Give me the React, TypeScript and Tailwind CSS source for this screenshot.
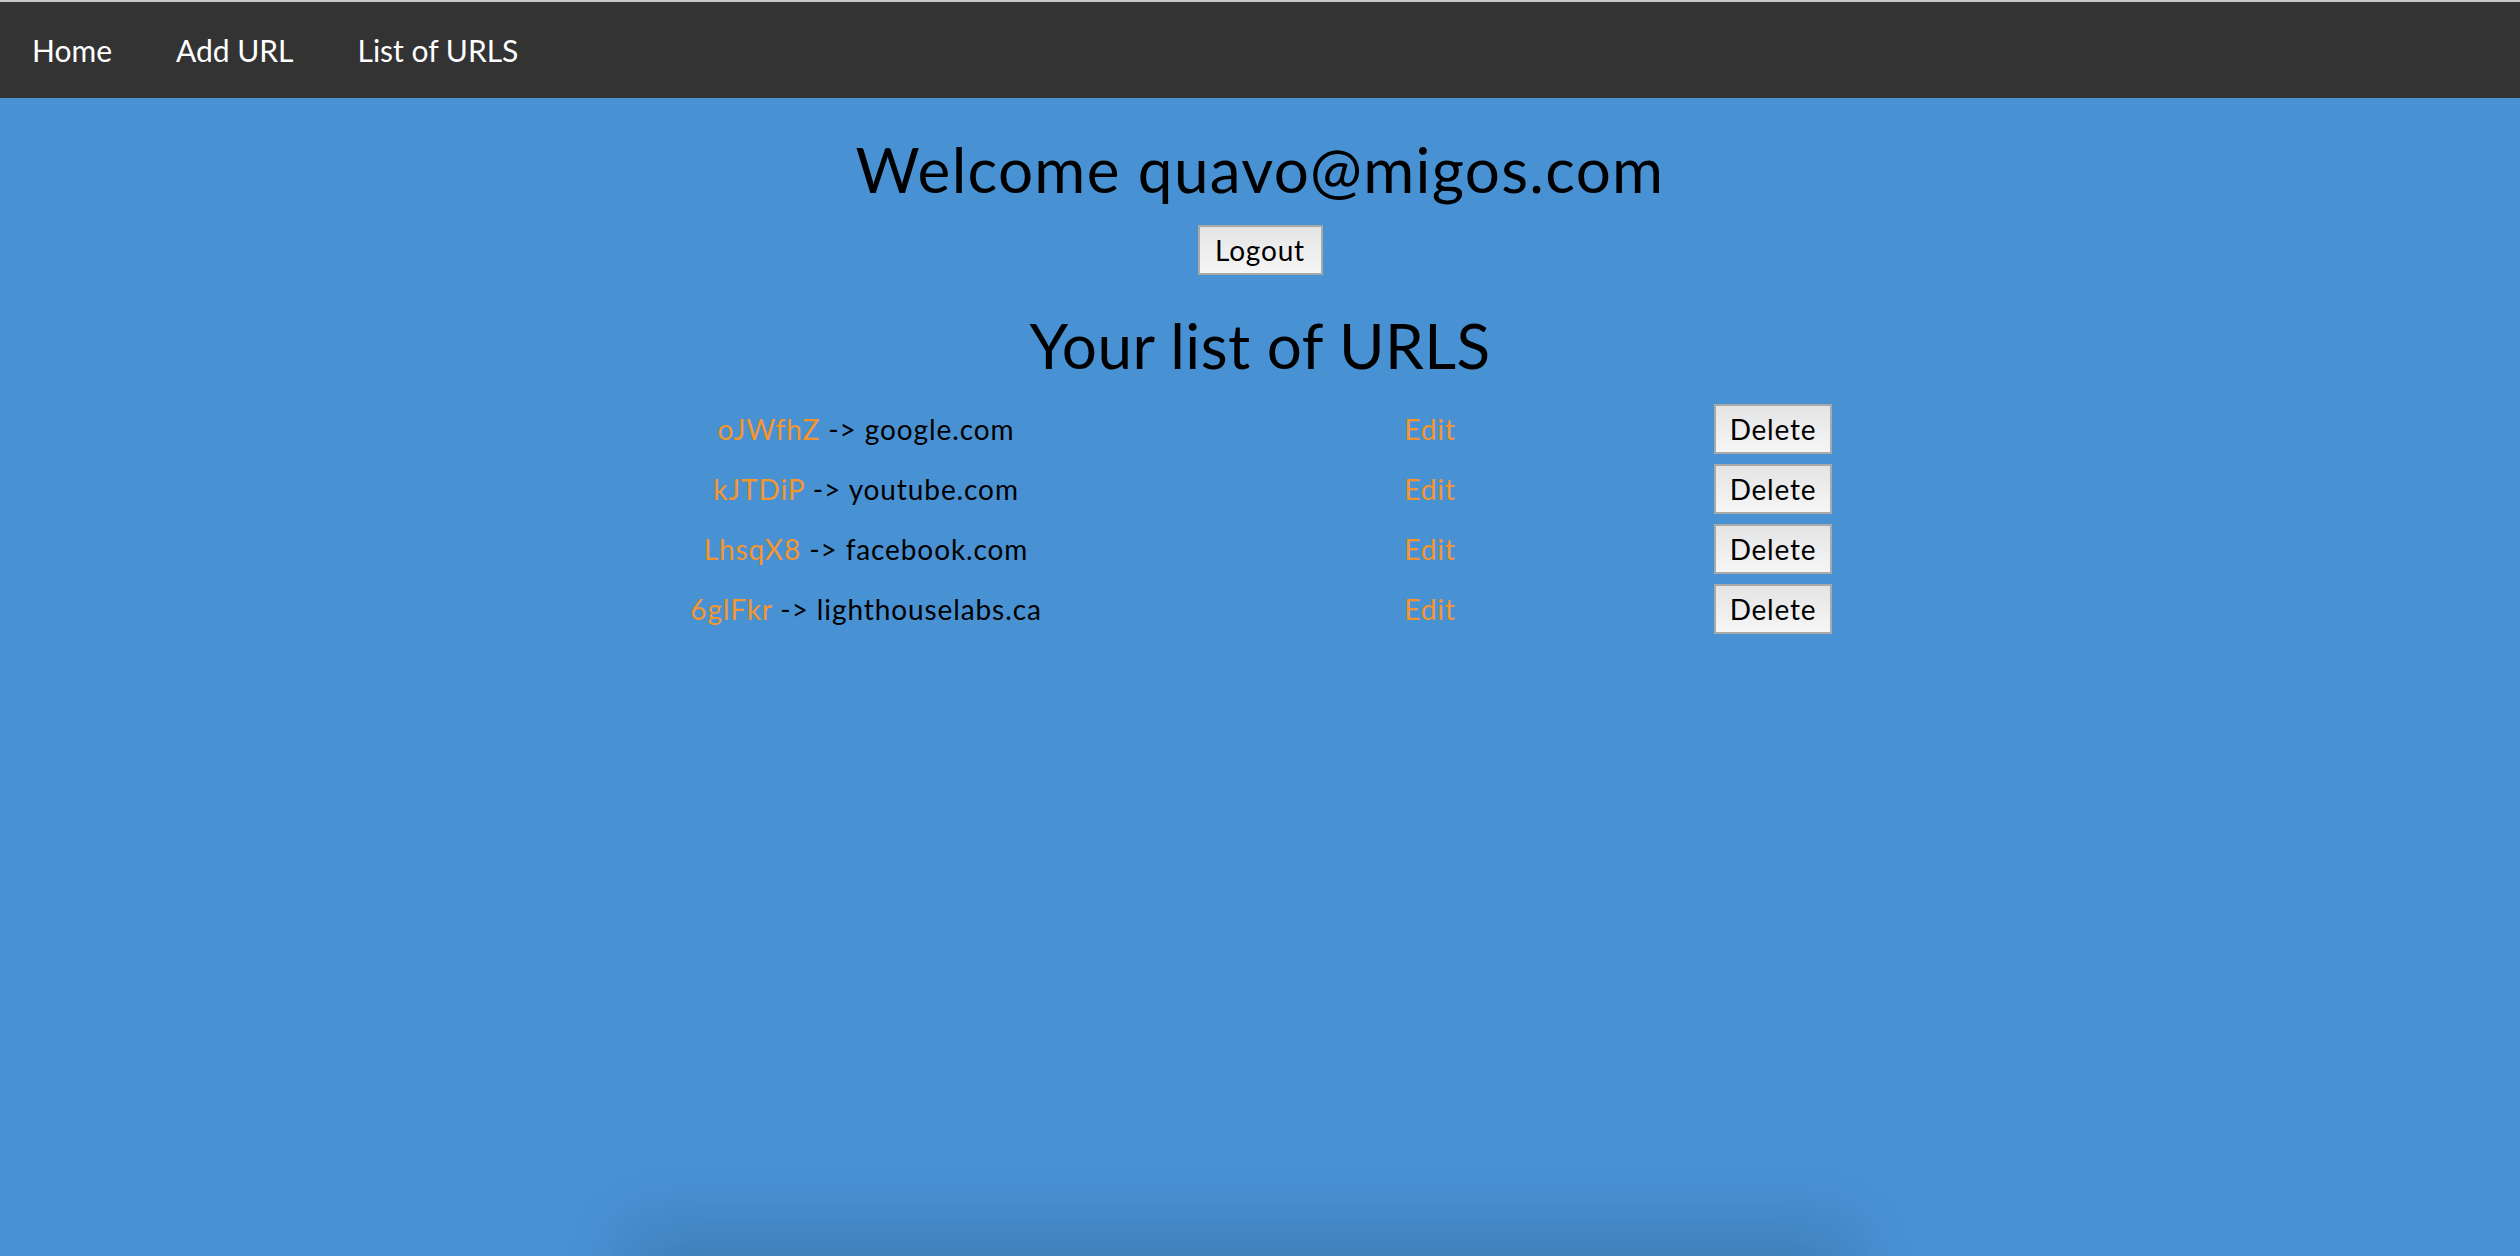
import React from "react";

const rows = [
  { code: "oJWfhZ", url: "google.com" },
  { code: "kJTDiP", url: "youtube.com" },
  { code: "LhsqX8", url: "facebook.com" },
  { code: "6glFkr", url: "lighthouselabs.ca" },
];

function Btn({ children, className }: { children: React.ReactNode; className?: string }) {
  return (
    <button
      className={
        "h-[50px] border-2 border-[#a9a9a9] bg-gradient-to-b from-[#e4e4e4] to-[#f6f6f6] text-[28px] tracking-[0.8px] leading-none text-black flex items-center justify-center " +
        (className ?? "")
      }
    >
      {children}
    </button>
  );
}

export default function App() {
  return (
    <div className="relative h-[1256px] w-full overflow-hidden bg-[#4891d3] font-['Lato',sans-serif]">
      <nav className="flex h-[98px] items-center gap-[64px] border-t-2 border-[#c8c8c8] bg-[#333333] pl-[32px] text-[30px] text-white">
        <a>Home</a>
        <a>Add URL</a>
        <a>List of URLS</a>
      </nav>

      <main className="flex flex-col items-center">
        <h1 className="mt-[34px] text-[62px] leading-[1.2] tracking-[1.3px] text-black">Welcome quavo@migos.com</h1>
        <Btn className="mt-[19px] h-[48px] w-[125px]">Logout</Btn>
        <h2 className="mt-[33px] text-[62px] leading-[1.2] tracking-[0.4px] text-black">Your list of URLS</h2>

        <div className="mt-[21px] flex w-[1400px] flex-col gap-[10px]">
          {rows.map((r) => (
            <div key={r.code} className="flex h-[50px] items-center text-[28px] tracking-[0.9px]">
              <div className="w-[612px] text-center">
                <span className="text-[#f6952c]">{r.code}</span>
                <span className="text-black"> -&gt; {r.url}</span>
              </div>
              <div className="w-[516px] text-center text-[#f6952c]">Edit</div>
              <div className="flex w-[272px] pl-[26px]">
                <Btn className="w-[118px]">Delete</Btn>
              </div>
            </div>
          ))}
        </div>
      </main>

      <div className="absolute left-[660px] right-[700px] top-[1262px] h-[40px] shadow-[0_0_70px_30px_rgba(0,0,0,0.15)]" />
    </div>
  );
}
